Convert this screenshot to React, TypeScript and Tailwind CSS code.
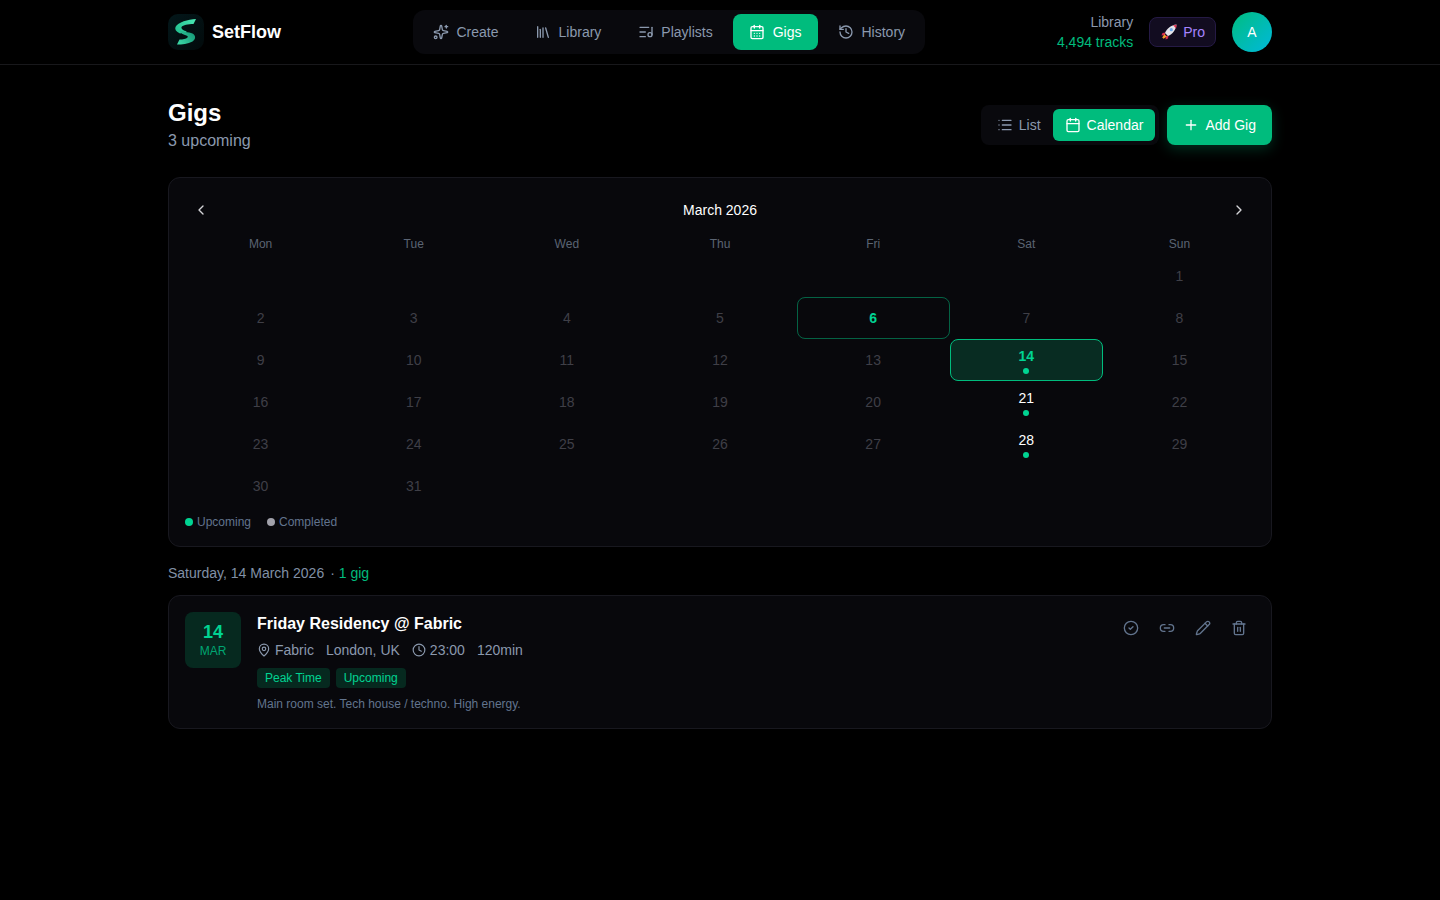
import {
  Calendar,
  CalendarDays,
  ChevronLeft,
  ChevronRight,
  CircleCheck,
  Clock,
  History,
  Library,
  Link2,
  List,
  ListMusic,
  MapPin,
  Pencil,
  Plus,
  Sparkles,
  Trash2,
} from "lucide-react";

const NAV_ITEMS = [
  { label: "Create", icon: Sparkles },
  { label: "Library", icon: Library },
  { label: "Playlists", icon: ListMusic },
  { label: "Gigs", icon: CalendarDays, active: true },
  { label: "History", icon: History },
];

const WEEKDAYS = ["Mon", "Tue", "Wed", "Thu", "Fri", "Sat", "Sun"];

// March 2026 starts on a Sunday, so six empty cells first
const DAYS: (number | null)[] = [
  ...Array.from({ length: 6 }, () => null),
  ...Array.from({ length: 31 }, (_, i) => i + 1),
];

const GIG_DAYS = [14, 21, 28];

const Logo = () => (
  <div className="flex h-9 w-9 items-center justify-center rounded-[10px] bg-gradient-to-br from-[#03171a] to-[#020a0b]">
    <svg width="36" height="36" viewBox="0 0 36 36" fill="none">
      <defs>
        <linearGradient id="sfTop" x1="28" y1="5" x2="8" y2="18" gradientUnits="userSpaceOnUse">
          <stop stopColor="#4be8b4" />
          <stop offset="1" stopColor="#22c08f" />
        </linearGradient>
        <linearGradient id="sfBottom" x1="9" y1="30" x2="25" y2="18" gradientUnits="userSpaceOnUse">
          <stop stopColor="#3fdcaa" />
          <stop offset="1" stopColor="#169a78" />
        </linearGradient>
      </defs>
      <path d="M28 5 L25.5 10 C20 10 15 11 13.5 13 C13 15 15.5 16.5 19 17.5 L12 19.5 C8 17.5 6.5 15.5 7.5 13 C10 8 20 5.5 28 5 Z" fill="url(#sfTop)" />
      <path d="M11 15.5 C14 18.5 21 17.5 24.5 19.5 C28 21.5 28 25 24.5 27.5 C20 30 14 30.5 9 30.5 L11.5 25.5 C15 25.5 18 25 19.5 23.5 C20.5 22 19 21.5 17 21 C13.5 20 11 18 11 15.5 Z" fill="url(#sfBottom)" />
    </svg>
  </div>
);

const Rocket = () => (
  <svg width="16" height="16" viewBox="0 0 16 16" fill="none">
    <path d="M4.5 8.5 L1.5 9 L0.5 11.5 L4 11 Z" fill="#dc2f4f" />
    <path d="M7.5 11.5 L7 14.5 L4.6 15.5 L5 12 Z" fill="#dc2f4f" />
    <path d="M4 9 C6 4.5 10 1 15.5 0.5 C15 6 11.5 10 7 12 Z" fill="#e4e4ea" />
    <path d="M12 1 C13 1 14 1.5 15.5 0.5 C15.5 2 15.5 3 15 4.5 C14 3.5 13 2 12 1 Z" fill="#dc2f4f" />
    <circle cx="10.3" cy="5.7" r="1.6" fill="#6aa6e8" />
    <path d="M3.4 10.2 L5.8 12.6 L2.6 14.8 L1.2 13.4 Z" fill="#f59e2e" />
  </svg>
);

const DayCell = ({ day }: { day: number | null }) => {
  if (day === null) return <div className="h-[42px]" />;

  const hasGig = GIG_DAYS.includes(day);
  const isToday = day === 6;
  const isSelected = day === 14;

  let cls = "border-transparent";
  if (isToday) cls = "border-emerald-500/50";
  if (isSelected) cls = "border-emerald-500 bg-[#082c22]";

  let textCls = "text-[#3f3f47]";
  if (hasGig) textCls = "font-medium text-white";
  if (isToday || isSelected) textCls = "font-bold text-emerald-400";

  return (
    <div className={`flex h-[42px] flex-col items-center justify-center gap-1 rounded-lg border ${cls}`}>
      <span className={`text-[14px] leading-[17px] ${hasGig ? "translate-y-[0.5px]" : ""} ${textCls}`}>{day}</span>
      {hasGig && <span className="h-1.5 w-1.5 rounded-full bg-emerald-400" />}
    </div>
  );
};

export default function App() {
  return (
    <div className="min-h-[900px] bg-black font-['Liberation_Sans',Arial,sans-serif] text-white">
      <header className="h-[65px] border-b border-[#18181b]">
        <div className="mx-auto flex h-16 w-[1104px] items-center">
          <div className="flex w-[245px] items-center gap-2">
            <Logo />
            <span className="text-lg font-bold">SetFlow</span>
          </div>
          <nav className="flex h-11 w-[512px] items-center gap-1 rounded-xl bg-[#09090d] p-1">
            {NAV_ITEMS.map(({ label, icon: Icon, active }) => (
              <div
                key={label}
                className={`flex h-9 items-center gap-[7.5px] rounded-lg pl-4 pr-[16.5px] text-sm ${
                  active ? "bg-emerald-500 text-white" : "text-[#8b99ae]"
                }`}
              >
                <Icon size={16} />
                {label}
              </div>
            ))}
          </nav>
          <div className="ml-auto flex items-center">
            <div className="text-right text-sm leading-5">
              <div className="text-[#8b99ae]">Library</div>
              <div className="text-emerald-500">4,494 tracks</div>
            </div>
            <div className="ml-4 flex h-[30px] items-center gap-1.5 rounded-lg border border-[#251a45] bg-[#120c20] pl-[11px] pr-2.5 text-sm text-violet-400">
              <Rocket />
              Pro
            </div>
            <div className="ml-4 flex h-10 w-10 items-center justify-center rounded-full bg-gradient-to-br from-emerald-500 to-cyan-500 text-sm font-medium">
              A
            </div>
          </div>
        </div>
      </header>

      <main className="mx-auto w-[1104px] pt-8">
        <div className="mb-6 flex items-start justify-between">
          <div>
            <h1 className="text-2xl font-bold leading-8">Gigs</h1>
            <p className="text-base leading-6 text-[#8b99ae]">3 upcoming</p>
          </div>
          <div className="mt-2 flex items-center gap-2">
            <div className="flex h-10 items-center rounded-lg bg-[#09090d] p-1">
              <div className="flex h-8 items-center gap-1.5 px-3 text-sm text-[#8b99ae]">
                <List size={16} />
                List
              </div>
              <div className="flex h-8 items-center gap-1.5 rounded-md bg-emerald-500 px-3 text-sm">
                <Calendar size={16} />
                Calendar
              </div>
            </div>
            <div className="flex h-10 items-center gap-1.5 rounded-lg bg-emerald-500 px-4 text-sm font-medium shadow-[0_4px_14px_rgba(0,188,125,0.25)]">
              <Plus size={16} />
              Add Gig
            </div>
          </div>
        </div>

        <section className="rounded-xl border border-[#18181f] bg-[#08080c] p-4">
          <div className="flex h-8 items-center justify-between px-2">
            <ChevronLeft size={16} className="text-[#d4d4d8]" />
            <span className="text-sm font-medium">March 2026</span>
            <ChevronRight size={16} className="text-[#d4d4d8]" />
          </div>
          <div className="-mx-px grid grid-cols-7">
            {WEEKDAYS.map((d) => (
              <div key={d} className="flex h-[29px] items-center justify-center pt-1.5 text-xs text-[#5b6473]">
                {d}
              </div>
            ))}
            {DAYS.map((day, i) => (
              <DayCell key={i} day={day} />
            ))}
          </div>
          <div className="mt-[7px] flex items-center gap-4 text-xs leading-4 text-slate-500">
            <span className="flex items-center gap-1">
              <span className="h-2 w-2 rounded-full bg-emerald-400" />
              Upcoming
            </span>
            <span className="flex items-center gap-1">
              <span className="h-2 w-2 rounded-full bg-[#a1a1aa]" />
              Completed
            </span>
          </div>
        </section>

        <p className="mb-3 mt-4 flex text-sm leading-5 text-[#8090a6]">
          Saturday, 14 March 2026
          <span className="ml-[6px] whitespace-pre">· </span>
          <span className="text-emerald-500">1 gig</span>
        </p>

        <section className="flex justify-between rounded-xl border border-[#18181f] bg-[#08080c] p-4">
          <div className="flex gap-4">
            <div className="flex h-14 w-14 flex-col items-center justify-center rounded-lg bg-[#06291f] pb-0.5">
              <span className="text-lg font-bold leading-6 text-emerald-400">14</span>
              <span className="-mt-px text-xs leading-4 text-[#00a672]">MAR</span>
            </div>
            <div>
              <h3 className="mt-0.5 text-base font-bold leading-5">Friday Residency @ Fabric</h3>
              <div className="mt-1.5 flex items-center text-sm leading-5 text-[#8b99ae]">
                <MapPin size={14} className="mr-1" />
                Fabric
                <span className="ml-3">London, UK</span>
                <Clock size={14} className="ml-3 mr-1" />
                23:00
                <span className="ml-3">120min</span>
              </div>
              <div className="mt-2 flex gap-1.5">
                <span className="flex h-5 items-center rounded bg-[#06291f] px-2 text-xs text-emerald-400">Peak Time</span>
                <span className="flex h-5 items-center rounded bg-[#06291f] px-2 text-xs text-emerald-400">Upcoming</span>
              </div>
              <p className="mt-2 text-xs leading-4 text-slate-500">Main room set. Tech house / techno. High energy.</p>
            </div>
          </div>
          <div className="mr-2 mt-2 flex gap-5 text-slate-500">
            <CircleCheck size={16} />
            <Link2 size={16} />
            <Pencil size={16} />
            <Trash2 size={16} />
          </div>
        </section>
      </main>
    </div>
  );
}
